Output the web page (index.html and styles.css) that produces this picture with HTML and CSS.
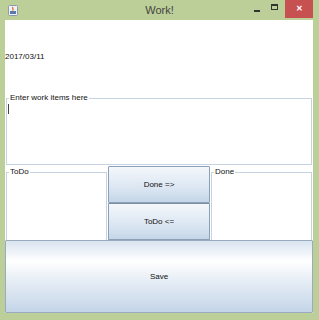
FILE: index.html
```html
<!DOCTYPE html>
<html lang="en">
<head>
  <meta charset="UTF-8">
  <title>Work!</title>
  <link rel="stylesheet" href="styles.css">
</head>
<body>
  <div class="window">
    <div class="titlebar">
      <svg class="app-icon" width="10" height="11" viewBox="0 0 10 11">
        <rect x="0.5" y="0.5" width="9" height="10" rx="1" fill="#eef2f6" stroke="#8d9bab"/>
        <path d="M5 2 C3.5 3.5 6.5 4 4.5 5.5" stroke="#e0602a" stroke-width="1.2" fill="none"/>
        <rect x="2" y="6" width="6" height="3" fill="#5b7aa8"/>
      </svg>
      <div class="title">Work!</div>
      <div class="controls">
        <span class="ctl min"></span>
        <span class="ctl max"></span>
        <span class="close">&#x2715;</span>
      </div>
    </div>
    <div class="content">
      <div class="date">2017/03/11</div>
      <fieldset class="box entry">
        <legend>Enter work items here</legend>
        <span class="caret"></span>
      </fieldset>
      <div class="lists">
        <fieldset class="box list">
          <legend>ToDo</legend>
        </fieldset>
        <div class="moves">
          <button class="btn">Done =&gt;</button>
          <button class="btn">ToDo &lt;=</button>
        </div>
        <fieldset class="box list">
          <legend>Done</legend>
        </fieldset>
      </div>
      <button class="btn save">Save</button>
    </div>
  </div>
</body>
</html>
```

FILE: styles.css
```css
body { margin: 0; background: #bccf98; font-family: "Liberation Sans", Arial, sans-serif; font-size: 8px; color: #000; }
.window { width: 319px; height: 320px; background: #bccf98; overflow: hidden; }
.titlebar { height: 20px; display: flex; align-items: flex-start; }
.app-icon { margin: 5px 0 0 8px; }
.title { flex: 1; text-align: center; font-size: 11px; color: #444; line-height: 20px; padding-left: 52px; }
.controls { display: flex; align-items: flex-start; }
.ctl { width: 18px; height: 14px; position: relative; }
.min::after { content: ""; position: absolute; left: 5px; top: 10px; width: 6px; height: 2px; background: #333; }
.max::after { content: ""; position: absolute; left: 4px; top: 4px; width: 7px; height: 6px; border: 1px solid #333; border-top-width: 2px; box-sizing: border-box; }
.close { width: 28px; height: 18px; margin-right: 6px; background: #c75050; color: #fff; font-size: 8px; font-weight: bold; text-align: center; line-height: 17px; }
.content { margin: 0 6px 0 5px; height: 293px; background: #fff; display: flex; flex-direction: column; }
.date { height: 78px; box-sizing: border-box; padding-top: 32px; line-height: 10px; color: #111; }
.box { margin: 0; padding: 0; border: 1px solid #c5d3e2; min-width: 0; box-sizing: border-box; }
.box legend { padding: 0 1px; margin-left: 2px; line-height: 10px; color: #111; }
.entry { margin: -5px 1px 0 1px; height: 72px; }
.caret { display: block; width: 1px; height: 10px; background: #444; margin: 1px 0 0 1px; }
.lists { display: flex; height: 74px; margin-top: 1px; }
.list { flex: 0 0 101px; margin: 1px 1px 0 1px; border-bottom: none; }
.moves { flex: 1; display: flex; flex-direction: column; }
.btn { font: inherit; color: #111; border: 1px solid #8d9fb6; border-radius: 1px; background: linear-gradient(#f4f7fb, #dbe6f2 60%, #c5d6e8); padding: 0; cursor: pointer; }
.moves .btn { flex: 1; }
.moves .btn + .btn { border-top-color: #7d8ea3; }
.save { flex: 1; background: linear-gradient(#d9e4f0, #ffffff 28%, #e3ebf4 60%, #c4d5e8); border-color: #9aabbf; }
```
